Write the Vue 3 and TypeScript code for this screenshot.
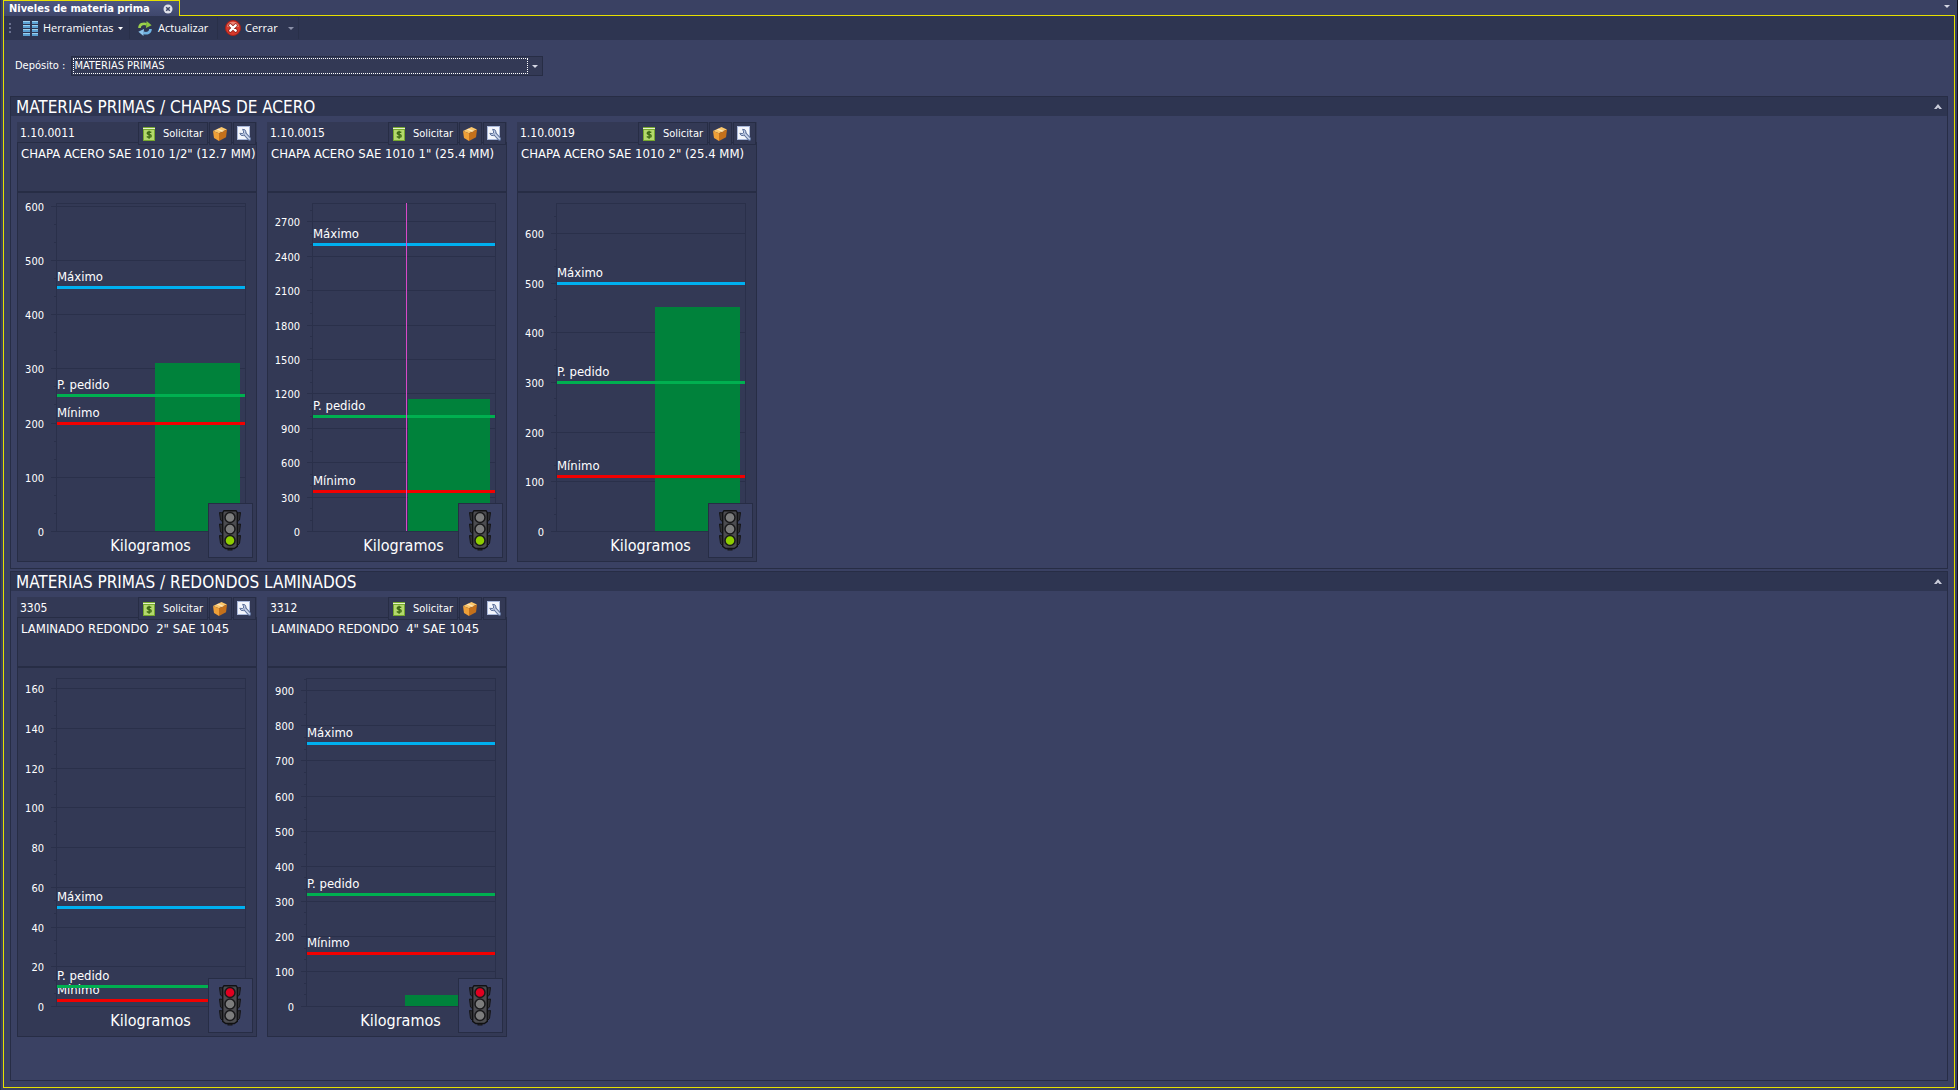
<script setup lang="ts">
import { ref } from 'vue'

interface Stock {
  code: string
  description: string
  axisLeft: number
  step: number
  pxPerStep: number
  stock: number
  max: number
  order: number
  min: number
  cursor?: boolean
}

interface Group {
  title: string
  items: Stock[]
}

const deposit = ref('MATERIAS PRIMAS')

const groups: Group[] = [
  {
    title: 'MATERIAS PRIMAS / CHAPAS DE ACERO',
    items: [
      { code: '1.10.0011', description: 'CHAPA ACERO SAE 1010 1/2" (12.7 MM)', axisLeft: 38, step: 100, pxPerStep: 54.25, stock: 310, max: 450, order: 250, min: 200 },
      { code: '1.10.0015', description: 'CHAPA ACERO SAE 1010 1" (25.4 MM)', axisLeft: 44, step: 300, pxPerStep: 34.4, stock: 1150, max: 2500, order: 1000, min: 350, cursor: true },
      { code: '1.10.0019', description: 'CHAPA ACERO SAE 1010 2" (25.4 MM)', axisLeft: 38, step: 100, pxPerStep: 49.7, stock: 450, max: 500, order: 300, min: 110 },
    ],
  },
  {
    title: 'MATERIAS PRIMAS / REDONDOS LAMINADOS',
    items: [
      { code: '3305', description: 'LAMINADO REDONDO  2" SAE 1045', axisLeft: 38, step: 20, pxPerStep: 39.75, stock: 0, max: 50, order: 10, min: 3 },
      { code: '3312', description: 'LAMINADO REDONDO  4" SAE 1045', axisLeft: 38, step: 100, pxPerStep: 35.08, stock: 32, max: 750, order: 320, min: 150 },
    ],
  },
]

const TOP = 10
const BASE = 338
const RIGHT = 227

function yOf(s: Stock, value: number): number {
  return Math.round(BASE - (value / s.step) * s.pxPerStep)
}

function majors(s: Stock): number[] {
  const count = Math.floor((BASE - TOP) / s.pxPerStep)
  return Array.from({ length: count + 1 }, (_, i) => i * s.step)
}

function minors(s: Stock): number[] {
  const third = s.pxPerStep / 3
  const count = Math.floor((BASE - TOP) / third)
  return Array.from({ length: count }, (_, i) => i + 1)
    .filter((i) => i % 3 !== 0)
    .map((i) => (i * s.step) / 3)
}

function barLeft(s: Stock): number {
  return Math.round((s.axisLeft + RIGHT) / 2) + 4
}

function limits(s: Stock) {
  return [
    { name: 'Mínimo', y: yOf(s, s.min), color: '#f20000' },
    { name: 'P. pedido', y: yOf(s, s.order), color: '#00b050' },
    { name: 'Máximo', y: yOf(s, s.max), color: '#00b0f0' },
  ]
}

function isLow(s: Stock): boolean {
  return s.stock < s.min
}
</script>

<template>
  <div class="window">
    <div class="tabs">
      <div class="tab">
        <span>Niveles de materia prima</span>
        <button class="plain" type="button" aria-label="Cerrar pestaña">
          <svg width="10" height="10" viewBox="0 0 10 10">
            <circle cx="5" cy="5" r="4.5" fill="#dfe1ea" />
            <path d="M3.2 3.2l3.6 3.6M6.8 3.2l-3.6 3.6" stroke="#3d4568" stroke-width="1.5" />
          </svg>
        </button>
      </div>
      <button class="plain tab-menu" type="button" aria-label="Lista de pestañas">
        <svg width="6" height="3" viewBox="0 0 6 3"><path d="M0 0h6L3 3z" fill="#d5d8e4" /></svg>
      </button>
    </div>

    <main class="frame">
      <div class="toolbar">
        <svg class="grip" width="2" height="11" viewBox="0 0 2 11">
          <path d="M0 0h2v2H0zM0 4h2v2H0zM0 8h2v2H0z" fill="#6a7190" />
        </svg>
        <button class="tool tools-menu" type="button">
          <svg width="16" height="15" viewBox="0 0 16 15">
            <g v-for="r in 4" :key="r">
              <rect x="0" :y="r * 4 - 4" width="7" height="3" fill="#5a9fd0" />
              <rect x="9" :y="r * 4 - 4" width="6" height="3" fill="#5a9fd0" />
              <rect x="0" :y="r * 4 - 4" width="7" height="1" fill="#9bd0ee" />
              <rect x="9" :y="r * 4 - 4" width="6" height="1" fill="#9bd0ee" />
            </g>
          </svg>
          <span>Herramientas</span>
          <svg width="5" height="3" viewBox="0 0 5 3"><path d="M0 0h5L2.500 3z" fill="#fff" /></svg>
        </button>
        <button class="tool refresh" type="button">
          <svg width="14" height="15" viewBox="0 0 14 15">
            <path d="M1.500 7C1.500 3.500 5 1.800 8.500 3.200" fill="none" stroke="#9bd04c" stroke-width="2.600" />
            <path d="M8.600 0l5 4.300-5.600 2.600z" fill="#8cc63e" />
            <path d="M12.500 8c0 3.500-3.500 5.200-7 3.800" fill="none" stroke="#6fb2e2" stroke-width="2.600" />
            <path d="M5.400 15L.4 10.700 6 8.100z" fill="#8cc4ec" />
          </svg>
          <span>Actualizar</span>
        </button>
        <button class="tool close" type="button">
          <svg width="16" height="16" viewBox="0 0 16 16">
            <circle cx="8" cy="8" r="7.500" fill="#d63a2c" stroke="#a92118" />
            <path d="M2 6.500a6.200 6.200 0 0 1 12 0C11 8 5 8 2 6.500z" fill="#ec8274" />
            <path d="M5.300 5.300l5.400 5.400M10.700 5.300l-5.400 5.400" stroke="#8e1a12" stroke-width="4" stroke-linecap="round" />
            <path d="M5.300 5.300l5.400 5.400M10.700 5.300l-5.400 5.400" stroke="#fff" stroke-width="2.400" stroke-linecap="round" />
          </svg>
          <span>Cerrar</span>
        </button>
        <button class="plain more" type="button" aria-label="Más opciones">
          <svg width="6" height="3" viewBox="0 0 6 3"><path d="M0 0h6L3 3z" fill="#8b91a9" /></svg>
        </button>
      </div>

      <div class="filter">
        <label for="deposit">Depósito :</label>
        <div class="combo">
          <select id="deposit" v-model="deposit">
            <option>MATERIAS PRIMAS</option>
          </select>
          <svg width="6" height="3" viewBox="0 0 6 3"><path d="M0 0h6L3 3z" fill="#d5d8e4" /></svg>
        </div>
      </div>

      <div class="groups">
        <section v-for="g in groups" :key="g.title" class="group">
          <header class="group-head">
            <h2>{{ g.title }}</h2>
            <button class="plain" type="button" aria-label="Contraer grupo">
              <svg width="8" height="5" viewBox="0 0 8 5"><path d="M0 5l4-5 4 5H5.500L4 3.600 2.500 5z" fill="#c9ccda" /></svg>
            </button>
          </header>

          <div class="cards">
            <article v-for="s in g.items" :key="s.code" class="card">
              <header class="card-head">
                <h3>{{ s.code }}</h3>
                <button class="card-btn request" type="button">
                  <svg width="12" height="14" viewBox="0 0 12 14">
                    <rect width="12" height="14" fill="#76a82f" />
                    <rect x="0" y="1" width="12" height="1" fill="#e6f3c8" />
                    <rect x="1" y="3" width="10" height="10" fill="#b4d96c" />
                    <path d="M8.300 5.600C7.400 4.700 4.200 4.600 4.200 6.200c0 1.700 4 .9 4 2.700 0 1.600-3.200 1.600-4.400.5M6.100 3.800v8" fill="none" stroke="#3d6a14" stroke-width="1.400" />
                  </svg>
                  <span>Solicitar</span>
                </button>
                <button class="card-btn" type="button" aria-label="Producto">
                  <svg width="14" height="14" viewBox="0 0 14 14">
                    <path d="M0 4l8.500-4L14 2.500 6 6.300z" fill="#fbc66b" />
                    <path d="M0 4l6 2.300V14L1 11z" fill="#ee9f38" />
                    <path d="M6 6.300l8-3.800-1 7.700L6 14z" fill="#c4701b" />
                    <path d="M3.500 2.600l5.600 2.200 1.700-.8-5.500-2.300z" fill="#fbe6bd" />
                  </svg>
                </button>
                <button class="card-btn" type="button" aria-label="Configurar">
                  <svg width="14" height="15" viewBox="0 0 14 15">
                    <rect x=".5" y=".5" width="12" height="13" fill="#f4f6fc" stroke="#a9b8da" />
                    <path d="M5.600 3.300a3.200 3.200 0 1 1-2.800 4l3 .3 1-1.600z" fill="#c9d4ea" stroke="#5d7099" />
                    <path d="M8.500 8.500l4 4.500" stroke="#5d7099" stroke-width="3.600" stroke-linecap="round" />
                    <path d="M8 8l4.400 4.800" stroke="#c9d4ea" stroke-width="1.800" stroke-linecap="round" />
                  </svg>
                </button>
              </header>
              <p class="card-desc">{{ s.description }}</p>

              <div class="chart">
                <svg width="238" height="368" viewBox="0 0 238 368">
                  <g class="grid">
                    <path :d="`M${s.axisLeft} ${TOP}h${RIGHT - s.axisLeft + 1}v${BASE - TOP + 1}H${s.axisLeft}zm1 1v${BASE - TOP - 1}h${RIGHT - s.axisLeft - 1}v-${BASE - TOP - 1}z`" fill-rule="evenodd" />
                    <rect v-for="v in majors(s)" :key="v" :x="s.axisLeft - 5" :y="yOf(s, v)" :width="RIGHT - s.axisLeft + 5" height="1" />
                    <rect v-for="v in minors(s)" :key="'m' + v" :x="s.axisLeft - 2" :y="yOf(s, v)" width="2" height="1" />
                  </g>
                  <text v-for="v in majors(s)" :key="'t' + v" class="tick" :x="s.axisLeft - 12" :y="yOf(s, v) + 5">{{ v }}</text>
                  <rect class="bar" :x="barLeft(s)" :y="yOf(s, s.stock)" :width="222 - barLeft(s)" :height="BASE - yOf(s, s.stock)" />
                  <g v-for="l in limits(s)" :key="l.name">
                    <text class="limit" :x="s.axisLeft + 1" :y="l.y - 6">{{ l.name }}</text>
                    <rect :x="s.axisLeft + 1" :y="l.y - 1" :width="RIGHT - s.axisLeft - 1" height="3" :fill="l.color" />
                  </g>
                  <rect v-if="s.cursor" x="138" :y="TOP" width="1" :height="BASE - TOP" fill="#d848c8" />
                  <text class="unit" :x="(s.axisLeft + RIGHT) / 2" y="358">Kilogramos</text>
                </svg>
                <div class="light">
                  <svg width="22" height="41" viewBox="0 0 22 41">
                    <g fill="#2e2e31" stroke="#151517">
                      <path d="M4 3L.5 2.500 1.500 10 4 12zM18 3l3.500-.5-1 7.500L18 12zM4 14.500L.5 14l1 8L4 24zM18 14.500l3.500-.5-1 8L18 24zM4 26l-3.500-.5 1 8L4 36zM18 26l3.500-.5-1 8L18 36z" />
                      <rect x="9" y="37" width="4" height="3" />
                    </g>
                    <path d="M5 .7h12l1.300 2v33.600l-3 2.200H6.700l-3-2.200V2.700z" fill="#4c4c50" stroke="#111113" stroke-width="1.400" />
                    <g stroke="#19191b" stroke-width="1.500">
                      <circle cx="11" cy="7.500" r="5" :fill="isLow(s) ? '#e00020' : '#7d7d7d'" />
                      <circle cx="11" cy="19" r="5" fill="#7d7d7d" />
                      <circle cx="11" cy="30.500" r="5" :fill="isLow(s) ? '#7d7d7d' : '#8fce00'" />
                    </g>
                  </svg>
                </div>
              </div>
            </article>
          </div>
        </section>
      </div>
    </main>
  </div>
</template>

<style>
body {
  background: #3a4163;
}
</style>

<style scoped>
.window {
  box-sizing: border-box;
  display: flex;
  flex-direction: column;
  min-height: 100vh;
  padding: 0 2px 2px;
  border-left: 1px solid #2b314a;
  border-right: 1px solid #10131f;
  background: #3a4163;
  color: #fff;
  font-family: "DejaVu Sans Condensed", "DejaVu Sans", sans-serif;
  font-size: 11px;
  line-height: 14px;
}

button {
  margin: 0;
  color: inherit;
  font: inherit;
}

svg {
  display: block;
  flex: none;
}

.plain {
  display: flex;
  padding: 0;
  border: 0;
  background: none;
}

.tabs {
  display: flex;
  justify-content: space-between;
  align-items: flex-start;
  height: 15px;
}

.tab {
  position: relative;
  box-sizing: border-box;
  display: flex;
  align-items: center;
  justify-content: space-between;
  width: 177px;
  height: 16px;
  padding: 0 6px 0 5px;
  border: 1px solid #e6e000;
  border-bottom: 0;
  background: linear-gradient(#4d5781, #3f476c);
  font-weight: bold;
}

.tab-menu {
  margin: 5px 5px 0 0;
}

.frame {
  display: flex;
  flex: 1;
  flex-direction: column;
  border: 1px solid #e6e000;
}

.toolbar {
  display: flex;
  align-items: center;
  height: 24px;
  padding-left: 5px;
  background: #2e3551;
  font-family: "Open Sans", "Noto Sans", sans-serif;
}

.tool {
  display: flex;
  align-items: center;
  box-sizing: border-box;
  height: 22px;
  padding: 0;
  border: 0;
  border-right: 1px solid #293049;
  background: none;
}

.tools-menu {
  gap: 4px;
  width: 119px;
  padding-left: 12px;
}

.refresh {
  gap: 6px;
  width: 88px;
  padding-left: 8px;
}

.close {
  gap: 4px;
  padding-left: 7px;
  border: 0;
}

.more {
  align-items: center;
  height: 22px;
  padding: 0 4px 0 10px;
  border-right: 1px solid #293049;
}

.filter {
  display: flex;
  align-items: center;
  gap: 6px;
  padding: 16px 11px 20px;
}

.combo {
  box-sizing: border-box;
  display: flex;
  align-items: center;
  gap: 4px;
  width: 472px;
  height: 20px;
  padding: 1px 4px 1px 1px;
  border: 1px solid #272d45;
  background: #333955;
}

.combo select {
  flex: 1;
  height: 16px;
  padding: 0;
  border: 1px dotted #fff;
  appearance: none;
  background: none;
  color: #fff;
  font: inherit;
}

.groups {
  display: flex;
  flex: 1;
  flex-direction: column;
  gap: 2px;
  padding: 0 6px 6px;
}

.group {
  border: 1px solid #272d45;
}

.group:last-child {
  flex: 1;
}

.group-head {
  display: flex;
  align-items: center;
  justify-content: space-between;
  height: 19px;
  padding: 0 5px;
  background: #2e3551;
}

.group-head h2 {
  margin: 0;
  font-size: 17px;
  font-weight: normal;
}

.cards {
  display: flex;
  flex-wrap: wrap;
  gap: 10px;
  padding: 6px;
}

.card {
  width: 240px;
}

.card-head {
  display: flex;
  gap: 1px;
  height: 20px;
  padding: 0 1px 0 3px;
  background: #333955;
}

.card-head h3 {
  flex: 1;
  margin: 0;
  font-size: 12px;
  font-weight: normal;
  line-height: 22px;
}

.card-btn {
  position: relative;
  box-sizing: border-box;
  display: flex;
  align-items: center;
  width: 23px;
  height: 23px;
  padding: 0 0 0 3px;
  border: 1px solid #272d45;
  background: #333955;
}

.request {
  gap: 8px;
  width: 70px;
  padding-left: 4px;
}

.card-desc {
  box-sizing: border-box;
  height: 50px;
  margin: 0;
  padding: 4px 3px;
  border: 1px solid #272d45;
  background: #333955;
  font-size: 13px;
  white-space: pre;
}

.chart {
  position: relative;
  border: 1px solid #272d45;
  background: #333955;
}

.grid {
  fill: #2a304a;
}

.tick {
  fill: #fff;
  font-size: 11px;
  text-anchor: end;
}

.bar {
  fill: #00823b;
}

.limit {
  fill: #fff;
  font-size: 13px;
}

.unit {
  fill: #fff;
  font-size: 16px;
  text-anchor: middle;
}

.light {
  position: absolute;
  right: 3px;
  bottom: 3px;
  box-sizing: border-box;
  display: flex;
  align-items: center;
  width: 45px;
  height: 55px;
  padding-left: 10px;
  border: 1px solid #272d45;
  background: #3a4163;
}
</style>
